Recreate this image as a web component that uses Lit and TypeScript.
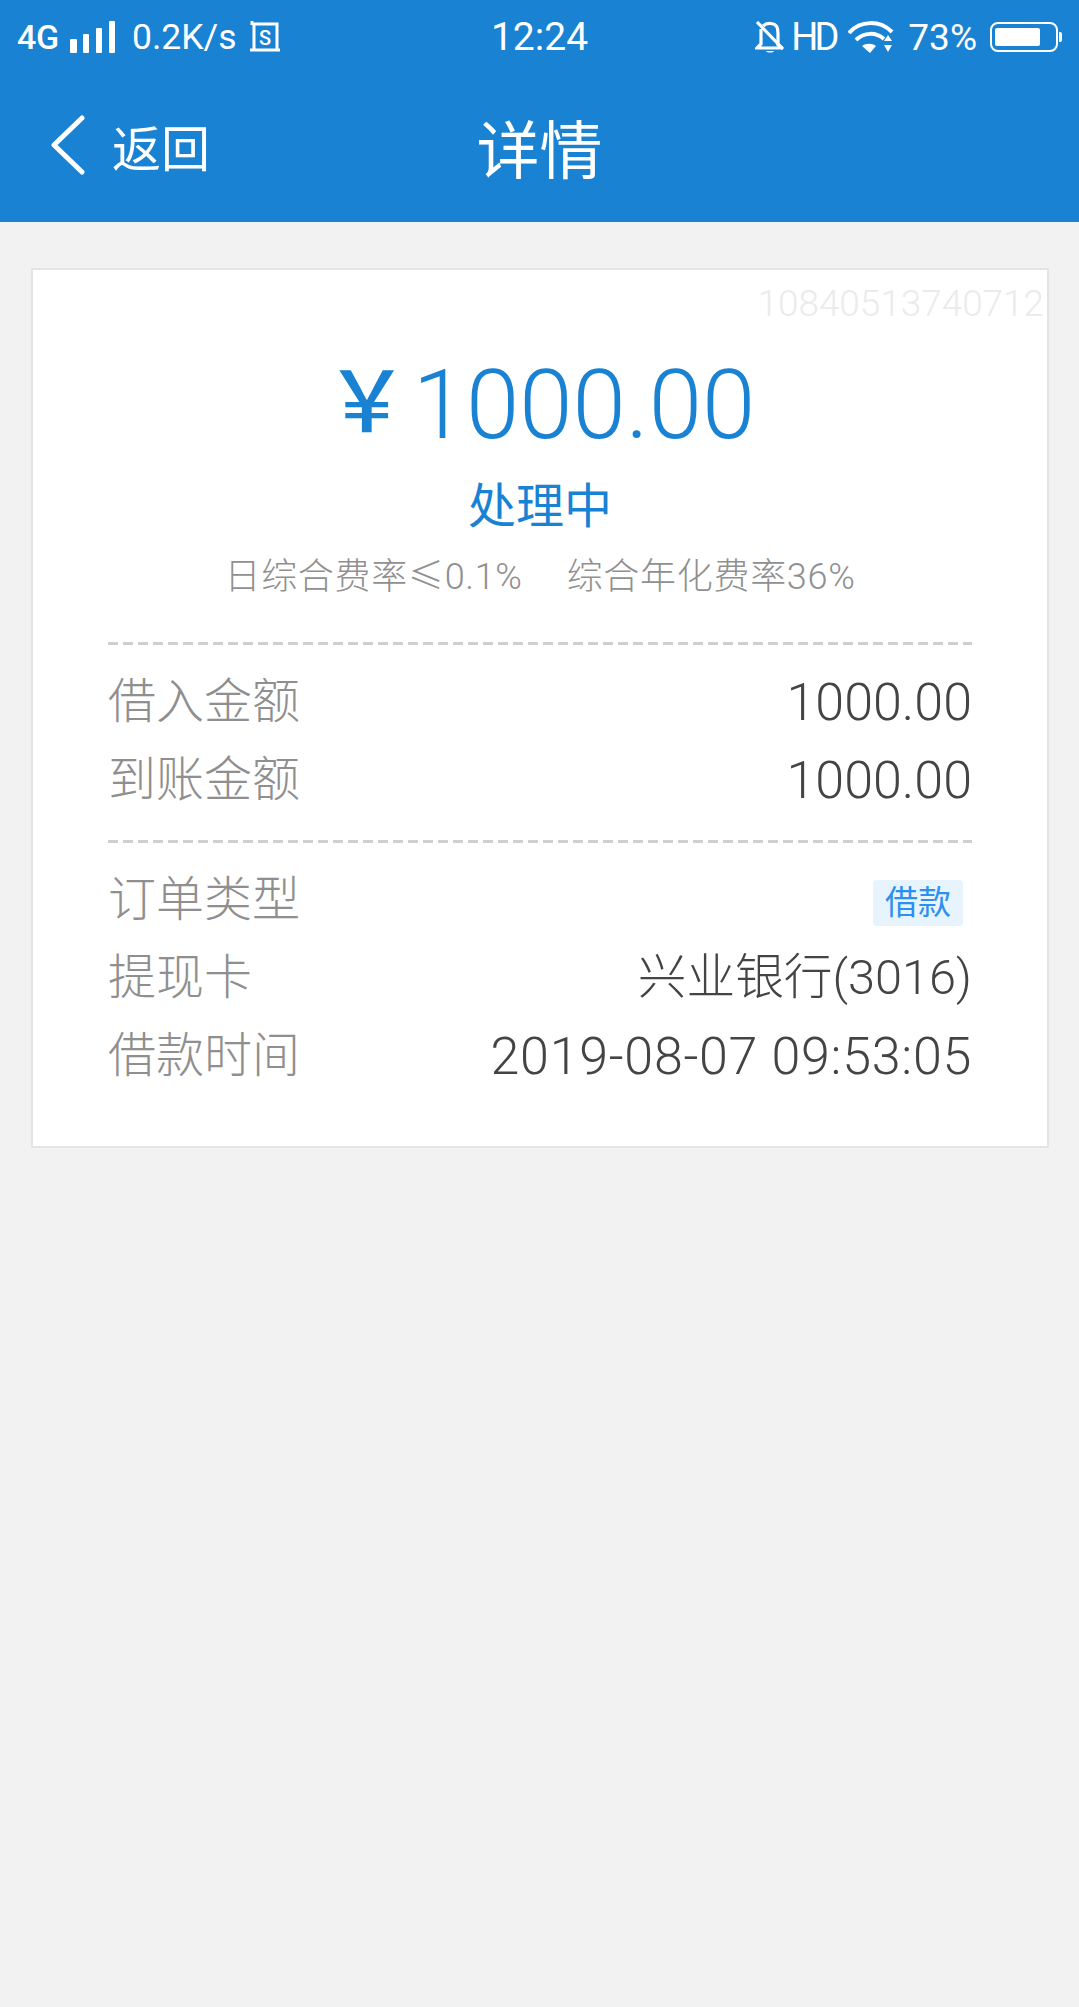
import { LitElement, html, css } from "lit";
import { customElement } from "lit/decorators.js";

const rows1 = [
  ["借入金额", "1000.00"],
  ["到账金额", "1000.00"],
];

@customElement("app-root")
export class AppRoot extends LitElement {
  static styles = css`
    :host {
      display: block;
      width: 1079px;
      height: 2007px;
      background: #f2f2f2;
      overflow: hidden;
      font-family: Roboto, "Noto Sans CJK SC", sans-serif;
    }
    .head { background: #1982d3; height: 222px; color: #fff; }
    .status {
      height: 74px;
      display: grid;
      grid-template-columns: 1fr auto 1fr;
      align-items: center;
    }
    .s-left { display: flex; align-items: center; padding-left: 17px; }
    .s-right { display: flex; align-items: center; justify-content: flex-end; padding-right: 17px; }
    .g4 { font-size: 34px; font-weight: 500; width: 53px; letter-spacing: -0.3px; }
    .speed { font-size: 35.5px; margin-left: 17px; width: 118px; white-space: nowrap; }
    .time { font-size: 39px; font-weight: 400; }
    .hd { font-size: 38px; font-weight: 400; margin: 0 14px 0 6px; letter-spacing: -4px; width: 43px; }
    .pct { font-size: 37px; margin: 0 13px 0 14px; }
    svg { display: block; }
    .nav {
      height: 148px;
      display: grid;
      grid-template-columns: 1fr auto 1fr;
      align-items: center;
    }
    .back { display: flex; align-items: center; padding-left: 50px; gap: 26px; font-size: 49px; }
    .title { font-size: 63px; }
    .nav > * { position: relative; top: -3px; }
    .card {
      margin: 46px 30px 0 31px;
      height: 880px;
      box-sizing: border-box;
      background: #fff;
      border: 2px solid #e4e4e4;
    }
    .wm {
      font-size: 36.9px;
      font-weight: 300;
      color: #ebebeb;
      text-align: right;
      padding: 12px 3px 0 0;
      line-height: 44px;
    }
    .amount {
      display: flex;
      justify-content: center;
      align-items: center;
      gap: 4px;
      height: 110px;
      color: #1982d3;
      font-size: 96px;
      font-weight: 300;
      line-height: 110px;
      margin-top: 24px;
    }
    .yen {
      font-size: 84px;
      font-family: "Noto Sans CJK SC", sans-serif;
      font-weight: 500;
      line-height: 110px;
      padding-bottom: 18px;
    }
    .state { text-align: center; color: #1982d3; font-size: 48px; line-height: 60px; margin-top: 17px; }
    .sub {
      display: flex;
      justify-content: center;
      align-items: baseline;
      gap: 44px;
      height: 50px;
      color: #909090;
      font-size: 36px;
      font-weight: 300;
      letter-spacing: 0.7px;
      line-height: 50px;
      margin-top: 15px;
      white-space: pre;
    }
    .le { font-family: "Noto Sans CJK SC", sans-serif; line-height: 1; }
    .sec { margin: 0 75px 0 75px; }
    .dash {
      height: 3px;
      background: repeating-linear-gradient(90deg, #cfcfcf 0 10px, transparent 10px 15px);
    }
    .first { margin-top: 40px; }
    .rows { padding: 13px 0 26px; }
    .row {
      display: flex;
      justify-content: space-between;
      align-items: center;
      height: 78px;
      font-size: 48px;
    }
    .lab { color: #8f8f8f; font-weight: 300; }
    .val { color: #444; font-size: 52px; font-weight: 300; white-space: nowrap; }
    .num { padding-top: 10px; }
    .date { letter-spacing: 0.7px; }
    .bank { font-size: 48.7px; }
    .tag {
      background: #e8f4fd;
      color: #2b90ef;
      font-size: 33px;
      width: 90px;
      height: 46px;
      line-height: 46px;
      text-align: center;
      border-radius: 4px;
      margin: 16px 9px 0 0;
    }
  `;

  render() {
    return html`
      <div class="head">
        <div class="status">
          <div class="s-left">
            <span class="g4">4G</span>
            <svg width="45" height="32" viewBox="0 0 45 32" fill="#fff">
              <rect x="0" y="18" width="7" height="14" rx="1" />
              <rect x="13" y="13" width="6" height="19" rx="1" />
              <rect x="26" y="7" width="6" height="25" rx="1" />
              <rect x="39" y="0" width="6" height="32" rx="1" />
            </svg>
            <span class="speed">0.2K/s</span>
            <svg width="30" height="32" viewBox="0 0 30 32" fill="none" stroke="#fff" stroke-width="3">
              <path d="M2 0v4M2 3h25v26M0 29h30M4 3v26" />
              <text x="15" y="24" font-size="20" font-family="Roboto" font-weight="500" fill="#fff" stroke="none" text-anchor="middle">S</text>
            </svg>
          </div>
          <div class="time">12:24</div>
          <div class="s-right">
            <svg width="30" height="33" viewBox="0 0 30 33" fill="none" stroke="#fff" stroke-width="3.2">
              <path d="M6 8v15l-4 4h26" />
              <path d="M8 5c4-4 12-3 14 1 1 2 1 4 1 7v11l4 3" />
              <path d="M2 1l26 27" />
              <path d="M11 30c1 2 7 2 8 0z" fill="#fff" stroke="none" />
            </svg>
            <span class="hd">HD</span>
            <svg width="46" height="32" viewBox="0 0 46 32" fill="none" stroke="#fff" stroke-width="4">
              <path d="M1 12C12 -1 32 -1 44 11" />
              <path d="M8 19c8-8 20-8 28-1" />
              <path d="M14 25l8 7 6-7c-4-3-10-3-14 0z" fill="#fff" stroke="none" />
              <path d="M36 20l4-6 4 6zM36 24h8l-4 7z" fill="#fff" stroke="none" />
            </svg>
            <span class="pct">73%</span>
            <svg width="72" height="30" viewBox="0 0 72 30">
              <rect x="1" y="1" width="66" height="28" rx="7" fill="none" stroke="#fff" stroke-width="2" />
              <rect x="5" y="6" width="45" height="18" rx="2" fill="#fff" />
              <path d="M69 10h1a2 2 0 0 1 2 2v6a2 2 0 0 1-2 2h-1z" fill="#fff" />
            </svg>
          </div>
        </div>
        <div class="nav">
          <div class="back">
            <svg width="36" height="60" viewBox="0 0 36 60" fill="none" stroke="#fff" stroke-width="5" stroke-linecap="round" stroke-linejoin="round">
              <path d="M32 3L4 30l28 27" />
            </svg>
            <span>返回</span>
          </div>
          <div class="title">详情</div>
          <div></div>
        </div>
      </div>
      <div class="card">
        <div class="wm">10840513740712</div>
        <div class="amount"><span class="yen">￥</span><span>1000.00</span></div>
        <div class="state">处理中</div>
        <div class="sub">
          <span>日综合费率<span class="le">≤</span>0.1%</span>
          <span>综合年化费率36%</span>
        </div>
        <div class="sec first">
          <div class="dash"></div>
          <div class="rows">
            ${rows1.map(
              ([a, b]) => html`<div class="row"><span class="lab">${a}</span><span class="val num">${b}</span></div>`
            )}
          </div>
          <div class="dash"></div>
          <div class="rows">
            <div class="row"><span class="lab">订单类型</span><span class="tag">借款</span></div>
            <div class="row"><span class="lab">提现卡</span><span class="val bank">兴业银行(3016)</span></div>
            <div class="row"><span class="lab">借款时间</span><span class="val num date">2019-08-07 09:53:05</span></div>
          </div>
        </div>
      </div>
    `;
  }
}
